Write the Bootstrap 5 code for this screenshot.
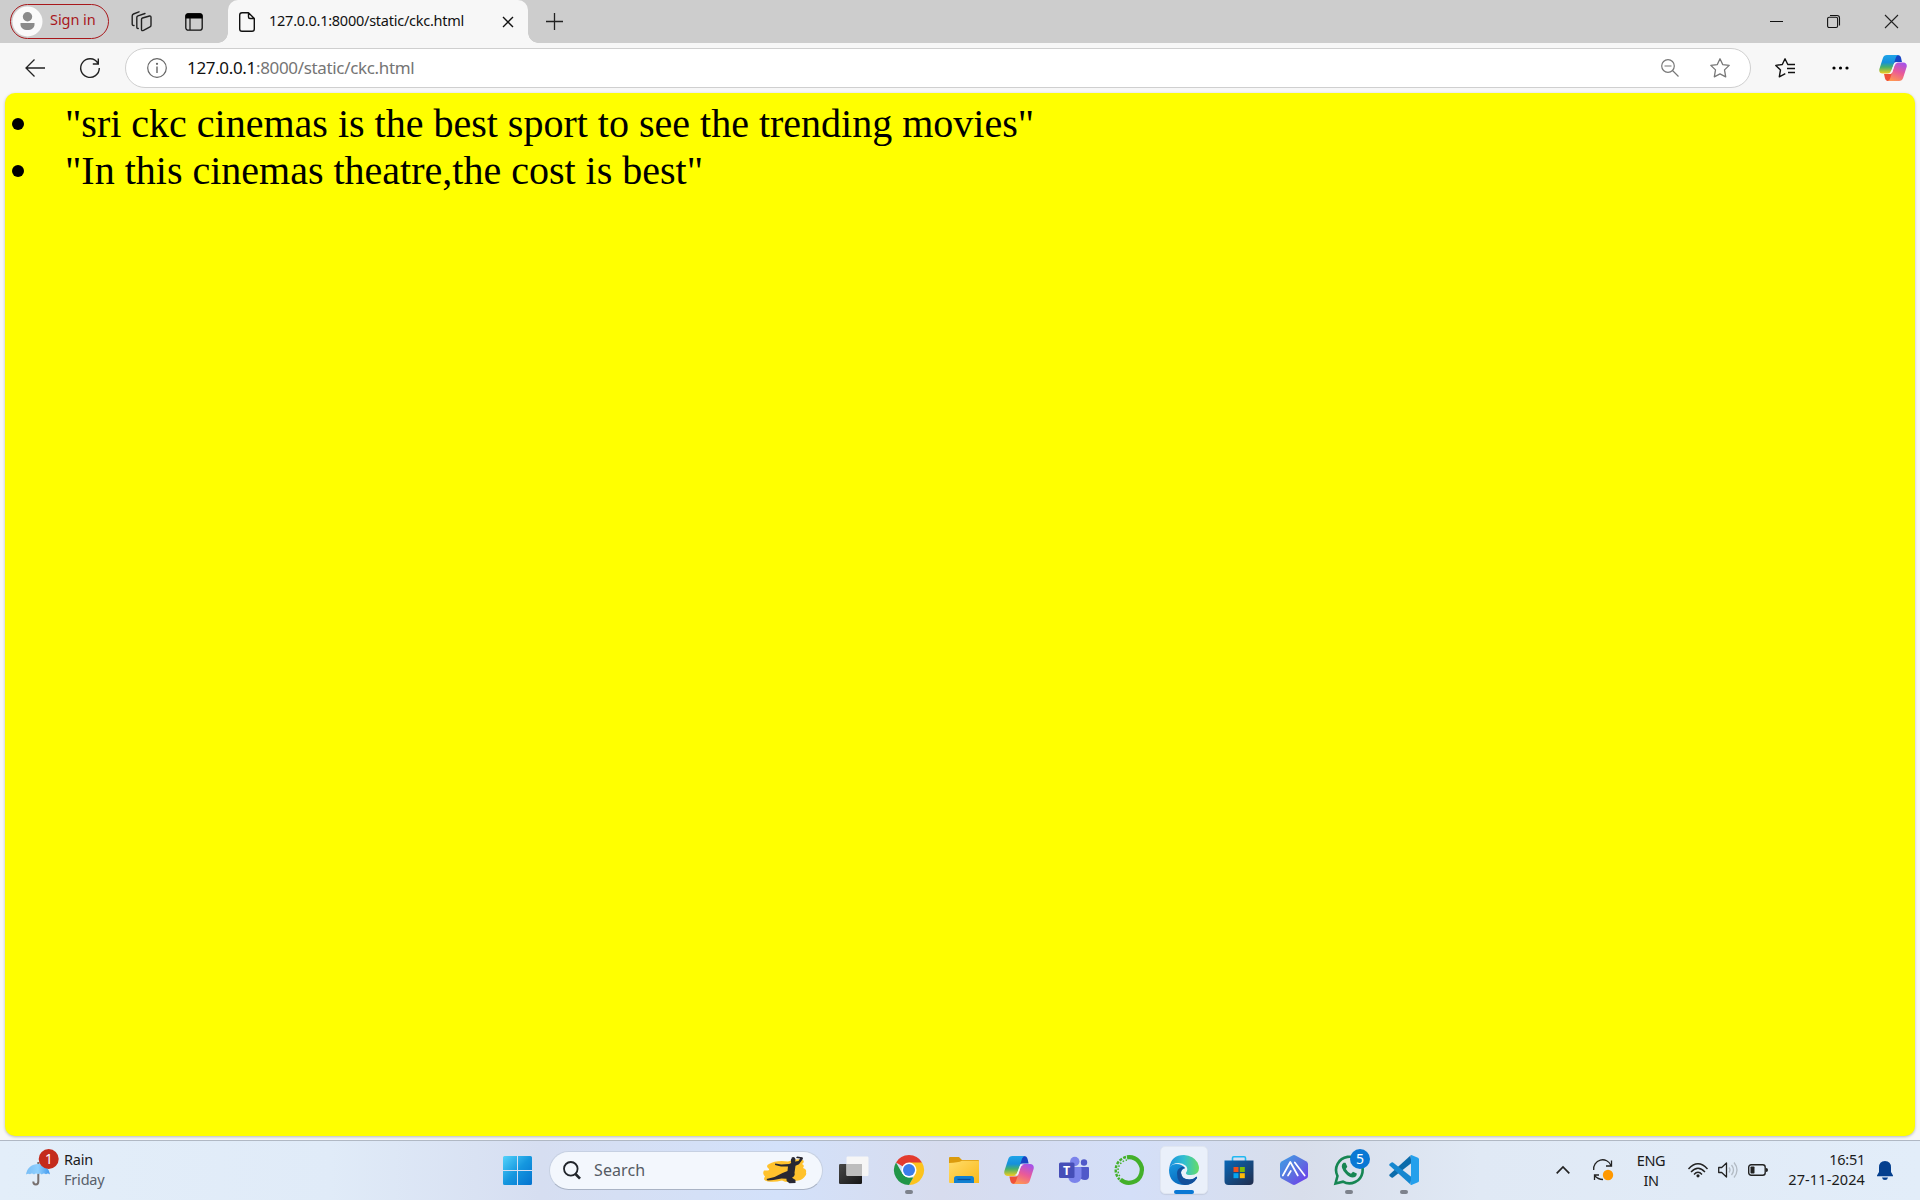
<!DOCTYPE html>
<html lang="en">
<head>
<meta charset="utf-8">
<title>127.0.0.1:8000/static/ckc.html</title>
<link href="https://cdn.jsdelivr.net/npm/bootstrap@5.3.0/dist/css/bootstrap.min.css" rel="stylesheet">
<style>
body{width:1920px;height:1200px;overflow:hidden;background:#f7f7f7;font-family:"Noto Sans","Open Sans",sans-serif;color:#1b1b1b}
svg{display:block;flex:none;overflow:visible}
.tabstrip{height:43px;background:#cdcdcd}
.signin{width:99px;height:35px;margin-left:10px;margin-bottom:1px;border:1.5px solid #a8181c;color:#a8181c;font-size:14.5px;letter-spacing:-.05px}
.tab-active{width:300px;height:43px;margin-left:25px;background:#f7f7f7;border-radius:10px 10px 0 0;font-size:14.5px}
.tab-active::before,.tab-active::after{content:"";position:absolute;bottom:0;width:10px;height:10px}
.tab-active::before{left:-10px;background:radial-gradient(circle at 0 0,transparent 9.5px,#f7f7f7 10px)}
.tab-active::after{right:-10px;background:radial-gradient(circle at 100% 0,transparent 9.5px,#f7f7f7 10px)}
.tab-title{margin-left:14px;width:234px;letter-spacing:-.25px;color:#111;line-height:20px;margin-bottom:3px}
.toolbar{height:50px}
.address{width:1626px;height:40px;margin-left:25px;border:1px solid #cfcfcf;font-size:17px;letter-spacing:-.34px}
.host{color:#111}.urlpath{color:#757575}
.viewport{width:1910px;height:1043px;margin-left:5px;background:#ff0;border-radius:10px;box-shadow:0 1px 3px rgba(0,0,0,.25);font-family:"Liberation Serif",serif;color:#000}
.points{font-size:40px;line-height:47px;padding-top:7px}
.points li{gap:41px;padding-left:7px}
.points li::before{content:"";width:12px;height:12px;margin-top:1px;border-radius:50%;background:#000}
.taskbar{height:60px;margin-top:4px;padding-bottom:1px;border-top:1px solid #b0b8c4;background:linear-gradient(90deg,#e3eef9 0,#e0ebf8 330px,#d6def1 540px,#d3e1fa 780px,#d7dcee 940px,#d4dff8 1130px,#d8deeb 1300px,#e0e9f5 1480px,#e2edf9 1920px)}
.weather{width:503px;padding-left:26px;padding-bottom:2px;font-size:14.5px;line-height:20px}
.weather-text{margin-left:14px;letter-spacing:-.2px}
.muted{color:#58606a}
.searchbox{width:274px;height:39px;margin-left:17px;background:#f3f7fd;border:1px solid #c6d0e2;border-bottom-color:#a9b3c5;font-size:16px;color:#555b64;letter-spacing:.1px}
.app{width:55px;height:58px}
.app-on{position:absolute;width:48px;height:48px;border-radius:5px;background:#eaf0fa;border:1px solid #e0e6f1;box-shadow:0 1px 1px rgba(0,0,0,.08)}
.runbar{position:absolute;bottom:5px;width:8px;height:4px;border-radius:2px;background:#7d828c}
.runbar.wide{width:20px;background:#0a78d4}
.tray{font-size:14.5px;line-height:20px;letter-spacing:-.35px}
.lang{width:30px;margin-left:23px}
.clock{width:87px;margin-left:10px;padding-bottom:2px;letter-spacing:.1px}
.clock-time{letter-spacing:-.25px}
</style>
<script src="https://cdn.jsdelivr.net/npm/bootstrap@5.3.0/dist/js/bootstrap.bundle.min.js"></script>
</head>
<body class="d-flex flex-column">
<svg width="0" height="0" class="position-absolute">
<defs>
<linearGradient id="cpA" x1="0" y1="0" x2="0" y2="1"><stop offset="0" stop-color="#1fa4e8"/><stop offset=".4" stop-color="#1590dc"/><stop offset=".65" stop-color="#48b06a"/><stop offset="1" stop-color="#f5cc1e"/></linearGradient>
<linearGradient id="cpB" x1=".7" y1="0" x2=".3" y2="1"><stop offset="0" stop-color="#a653e8"/><stop offset=".5" stop-color="#ea5a98"/><stop offset="1" stop-color="#ff9752"/></linearGradient>
<linearGradient id="winG" x1="0" y1="0" x2="1" y2="1"><stop offset="0" stop-color="#54d3fb"/><stop offset=".5" stop-color="#1597df"/><stop offset="1" stop-color="#0472cf"/></linearGradient>
<symbol id="copilot" viewBox="0 0 30 30">
<path d="M14 1h6c2 0 3 1 3.600 3l1 4.500h-6c-2 0-3 1-3.500 3z" fill="#1745c4"/>
<path d="M16 29h-6c-2 0-3-1-3.600-3l-1-4.500h6c2 0 3-1 3.500-3z" fill="#ef5038"/>
<path d="M8.500 1H21c-2 .4-2.800 2-3.400 4l-4 12.500c-.8 2.500-2 3.500-4.500 3.500H4C1 21-.3 19 .4 16L4.200 4.200C4.900 2 6.300 1 8.500 1z" fill="url(#cpA)"/>
<path d="M21.500 29H9c2-.4 2.800-2 3.400-4l4-12.500C17.200 10 18.400 9 20.900 9H26c3 0 4.300 2 3.600 5l-3.800 11.800c-.7 2.200-2.100 3.200-4.300 3.200z" fill="url(#cpB)"/>
<path d="M16.300 9.800h3.300c-1.600.4-2.500 1.200-3.200 3.200l-2.200 6.800h-3.300c1.400-.4 2-1.300 2.600-3z" fill="#f3f3fa"/>
</symbol>
</defs></svg>

<header class="tabstrip d-flex align-items-center flex-shrink-0">
<div class="signin rounded-pill d-flex align-items-center">
<svg width="31" height="31" viewBox="0 0 31 31"><circle cx="16.500" cy="15.500" r="15" fill="#fafafa"/><circle cx="16.500" cy="10.800" r="4.700" fill="#8a8a8a"/><path d="M9.500 17h14v1.500c0 3.500-3 5.500-7 5.500s-7-2-7-5.500z" fill="#8a8a8a"/></svg>
<span class="ms-2 mb-1 lh-1">Sign in</span></div>
<svg width="22" height="22" viewBox="0 0 22 22" style="margin-left:22px" fill="none" stroke="#222" stroke-width="1.400" stroke-linejoin="round" stroke-linecap="round"><path d="M11.500 7l7-2q1.500-.3 1.500 1.300v8q0 1.200-1 1.600l-6.500 3.500q-2 .8-2-1V8.500q0-1.200 1-1.500zM7.300 17.500q-1.500.3-1.500-1.500V6.500q0-1.300 1.200-1.700l7-2.300M3 14.500q-1.800.3-1.800-1.500V5q0-1.500 1.300-2L8 .8"/></svg>
<svg width="18" height="18" viewBox="0 0 18 18" style="margin-left:32px"><rect x=".8" y=".8" width="16.400" height="16.400" rx="2.500" fill="none" stroke="#111" stroke-width="1.300"/><path d="M.5 5.500V3Q.5.300 3 .300H15q2.500 0 2.500 2.700v2.500z" fill="#000"/><path d="M5 5v12" stroke="#111" stroke-width="1.200"/></svg>
<div class="tab-active position-relative d-flex align-items-center">
<svg width="16" height="20" viewBox="0 0 16 20" style="margin-left:11px" fill="none" stroke="#111" stroke-width="1.400" stroke-linejoin="round"><path d="M3 .7h6.500L15.300 6.500V17q0 2.300-2.300 2.300H3Q.7 19.300.7 17V3Q.7.700 3 .700zM9.500.700V5q0 1.500 1.500 1.500h4.300"/></svg>
<span class="tab-title">127.0.0.1:8000/static/ckc.html</span>
<svg width="10" height="10" viewBox="0 0 10 10"><path d="M0 0l10 10M10 0L0 10" stroke="#111" stroke-width="1.400"/></svg>
</div>
<svg width="17" height="17" viewBox="0 0 17 17" style="margin-left:18px;margin-bottom:1px"><path d="M0 8.500h17M8.500 0v17" stroke="#222" stroke-width="1.300"/></svg>
<div class="ms-auto d-flex align-items-center">
<svg width="13" height="13" viewBox="0 0 13 13"><path d="M0 6.500h13" stroke="#111"/></svg>
<svg width="13" height="13" viewBox="0 0 13 13" style="margin-left:44px" fill="none" stroke="#111" stroke-width="1.100"><rect x=".6" y="2.300" width="10" height="10.200" rx="1.500"/><path d="M3 .500h7q2.500 0 2.500 2.500v7.500"/></svg>
<svg width="13" height="13" viewBox="0 0 13 13" style="margin:0 22px 0 45px"><path d="M0 0l13 13M13 0L0 13" stroke="#222" stroke-width="1.100"/></svg>
</div>
</header>

<nav class="toolbar d-flex align-items-center flex-shrink-0">
<svg width="20" height="18" viewBox="0 0 20 18" style="margin-left:25px;margin-bottom:1px" fill="none" stroke="#222" stroke-width="1.300"><path d="M9.500.500L1 9l8.500 8.500M1 9h19"/></svg>
<svg width="20" height="20" viewBox="0 0 20 20" style="margin-left:35px" fill="none" stroke="#222" stroke-width="1.400"><path d="M17.800 5A9.300 9.300 0 1 0 19.300 10M18.300.500V6h-5.500"/></svg>
<div class="address bg-white rounded-pill d-flex align-items-center">
<svg width="20" height="20" viewBox="0 0 20 20" style="margin-left:21px" fill="none" stroke="#666" stroke-width="1.200"><circle cx="10" cy="10" r="9.300"/><path d="M10 8.500V15" stroke-width="1.400"/><circle cx="10" cy="5.800" r=".5" fill="#666"/></svg>
<span style="margin-left:20px;margin-bottom:1px"><span class="host">127.0.0.1</span><span class="urlpath">:8000/static/ckc.html</span></span>
<svg width="18" height="18" viewBox="0 0 18 18" class="ms-auto" fill="none" stroke="#777" stroke-width="1.200"><circle cx="7" cy="7" r="6.300"/><path d="M3.500 7h7M11.500 11.500l6 6"/></svg>
<svg width="20" height="20" viewBox="0 0 20 20" style="margin:0 20px 0 31px" fill="none" stroke="#777" stroke-width="1.300" stroke-linejoin="round"><path d="M10 .8l2.700 5.800 6.500.8-4.700 4.500 1.200 6.900L10 15.900l-5.700 2.900 1.200-6.900L.8 7.400l6.500-.8z"/></svg>
</div>
<svg width="20" height="20" viewBox="0 0 20 20" style="margin-left:24px" fill="none" stroke="#111" stroke-width="1.400" stroke-linejoin="round"><path d="M13.500 6.600l-.7-.1L10 .8 7.300 6.500.8 7.400l4.700 4.500-1.200 6.900 6-3.200M13 6.500h7M12 10.500h8M13 14.500h7"/></svg>
<svg width="17" height="4" viewBox="0 0 17 4" style="margin-left:37px"><circle cx="2" cy="2" r="1.600"/><circle cx="8.500" cy="2" r="1.600"/><circle cx="15" cy="2" r="1.600"/></svg>
<svg width="28" height="28" style="margin-left:30px"><use href="#copilot"/></svg>
</nav>

<main class="viewport flex-shrink-0">
<ul class="points list-unstyled mb-0">
<li class="d-flex align-items-center">"sri ckc cinemas is the best sport to see the trending movies"</li>
<li class="d-flex align-items-center">"In this cinemas theatre,the cost is best"</li>
</ul>
</main>

<footer class="taskbar d-flex align-items-center flex-shrink-0">
<div class="weather d-flex align-items-center">
<svg width="24" height="36" viewBox="0 0 24 36"><defs><linearGradient id="umb"><stop stop-color="#78bdf5"/><stop offset=".5" stop-color="#8fd0ff"/><stop offset="1" stop-color="#3f98ee"/></linearGradient></defs><path d="M12.300 11v19.500q0 3-2.500 3t-2.500-3" fill="none" stroke="#77706f" stroke-width="2"/><path d="M0 23.500C1 17 6 13 12 13s11 4 12 10.500q-2-2-4-.3-2.300-1.700-4.200.3-2-1.800-3.800-.3-2-1.500-4 .3-2-1.800-4-.3-2-1.200-4 .3z" fill="url(#umb)"/><circle cx="22.700" cy="8" r="10" fill="#c42b1c"/><text x="22.900" y="13" fill="#fff" font-size="13.500" text-anchor="middle">1</text></svg>
<div class="weather-text"><div>Rain</div><div class="muted">Friday</div></div>
</div>
<svg width="29" height="29" viewBox="0 0 29 29"><path fill="url(#winG)" d="M0 1.500Q0 0 1.500 0H14v14H0zM15 0h12.500Q29 0 29 1.500V14H15zM0 15h14v14H1.500Q0 29 0 27.500zM15 15h14v12.500q0 1.500-1.500 1.500H15z"/></svg>
<div class="searchbox rounded-pill d-flex align-items-center">
<svg width="18" height="19" viewBox="0 0 18 19" style="margin-left:13px" fill="none" stroke="#20242a"><circle cx="7.800" cy="7.800" r="6.800" stroke-width="1.800"/><path d="M12.500 13l4.500 4.700" stroke-width="2.600"/></svg>
<span style="margin-left:13px">Search</span>
<svg width="43" height="28" viewBox="0 0 43 28" style="margin:0 15px 0 auto"><path d="M5 8Q12 4 24 5.500 34 2 39 4q2 2-1 4 3 1 1 4 4 1 3 4.500 1 2-2 5-4 4-10 3-6 3-12 0-7 2-14 1-6-1-3-5-3-3-1-6Q6 15 5 13 1 10 5 8z" fill="#ffc22d"/><path d="M27.500 1.500q3-1.500 4 1.500 0 1.500-.5 2.500l3.500-.5 1.500-2.500-4-.5 1-1.500 5.500.8 .5 1.500-4 5.500-3.500 1.500-1 7q1 3-2.500 5l3.500 2.200v3l-6 .2-2-1.500q-1.500-.8-1-3l-5-.3-8 1.500-6 .7-1-1.500 8-2 8-4 5-2 .5-4.500-7-.2-6-1.500.2-1.500 6 1 8-.5 2-1q-1-4 .8-5z" fill="#292832"/></svg>
</div>
<div class="d-flex" style="margin-left:3px">
<div class="app d-flex align-items-center justify-content-center"><svg width="30" height="30" viewBox="0 0 30 30"><defs><linearGradient id="tvk" x1="0" y1="0" x2="1" y2="1"><stop stop-color="#474747"/><stop offset="1" stop-color="#161616"/></linearGradient></defs><rect x="0" y="9" width="23" height="20" rx="1.200" fill="url(#tvk)"/><rect x="7.500" y="1.500" width="22" height="19.500" rx="1.200" fill="#f6f6f6"/><path d="M7.500 9H23v12H8.500q-1 0-1-1z" fill="#bdbdbd"/></svg></div>
<div class="app position-relative d-flex align-items-center justify-content-center"><svg width="30" height="30" viewBox="0 0 30 30"><path d="M15 15L2 7.500A15 15 0 0 1 28 7.500z" fill="#e33b2e"/><path d="M15 7.500h13A15 15 0 0 1 15 30l6.500-11.200z" fill="#fcc31e"/><path d="M2 7.500l6.500 11.300q2.500 3.700 6.500 3.700h4.300L15 30A15 15 0 0 1 2 7.500z" fill="#219648"/><circle cx="15" cy="15" r="7.500" fill="#fff"/><circle cx="15" cy="15" r="6" fill="#3c7de9"/></svg><i class="runbar"></i></div>
<div class="app d-flex align-items-center justify-content-center"><svg width="30" height="30" viewBox="0 0 30 30"><defs><linearGradient id="fol" x1="0" y1="0" x2="1" y2="1"><stop stop-color="#ffdc6a"/><stop offset="1" stop-color="#fab91a"/></linearGradient></defs><path d="M0 8V3q0-1 1-1h9l3 3h16q1 0 1 1v4H0z" fill="#db9b0d"/><path d="M0 8q9-.2 13-2.300h16q1 0 1 1V28H1q-1 0-1-1z" fill="url(#fol)"/><path d="M5 28v-4.500Q5 21 7.500 21h15q2.500 0 2.500 2.500V28z" fill="#1180d1"/><path d="M8.500 24.500h13" stroke="#07509c" stroke-width="1.300"/></svg></div>
<div class="app d-flex align-items-center justify-content-center"><svg width="30" height="30"><use href="#copilot"/></svg></div>
<div class="app d-flex align-items-center justify-content-center"><svg width="30" height="30" viewBox="0 0 30 30"><circle cx="25" cy="7.500" r="3.200" fill="#5059c9"/><path d="M21 12h8q1 0 1 1v8q0 4-4 4-5 0-5-4z" fill="#5059c9"/><circle cx="15.800" cy="6.500" r="4.700" fill="#7b83eb"/><path d="M9 12h12.500q1 0 1 1v8.500Q22 28 15.800 28T9 21z" fill="#7b83eb"/><rect y="7.500" width="15.500" height="15.500" rx="1.500" fill="#464eb8"/><text x="7.700" y="20" fill="#fff" font-size="12.500" font-weight="700" text-anchor="middle">T</text></svg></div>
<div class="app d-flex align-items-center justify-content-center"><svg width="30" height="30" viewBox="0 0 30 30" fill="none" stroke="#43b02a"><path d="M13 2.300A12.800 12.800 0 1 1 6.500 24.500" stroke-width="4.300"/><path d="M12 2A13.500 13.500 0 0 0 5.500 24.500" stroke-width="2.400" stroke-dasharray="3 1.300"/><path d="M13 5A10.500 10.500 0 0 0 6 21.500" stroke-width="1.500" stroke-dasharray="1.500 1.700"/></svg></div>
<div class="app position-relative d-flex align-items-center justify-content-center"><i class="app-on"></i><svg class="position-relative" width="30" height="30" viewBox="0 0 30 30"><defs><linearGradient id="edA"><stop stop-color="#1a91df"/><stop offset=".5" stop-color="#32bfd0"/><stop offset="1" stop-color="#66dc65"/></linearGradient><linearGradient id="edB" x2=".6" y2="1"><stop stop-color="#1898df"/><stop offset="1" stop-color="#0764b9"/></linearGradient></defs><path d="M0 15Q0 9.500 7 9q7 0 9 4.500-4 .8-4 4.500 1 7 9 6.500 4-.5 6-2.500 1.500-.6 1 1-4 7-12 7Q0 29.500 0 15z" fill="url(#edB)"/><path d="M8 18q0-4 4.500-6 2-.5 3.500.8-4 1.200-4 5.200 1 7 9 6.500 4-.5 6-2.500 1.500-.6 1 1-4 7-12 7-8-1.500-8-12z" fill="#13509b"/><path d="M.300 13Q2 0 15 0q9.500.5 13.500 7.500 1.500 3.500 1.500 5.500 0 7-8 7-4.500 0-5-1.500-.3-1 1-2.500 1-3-1.500-5.500Q14 8 9.500 8 3 8 .300 13z" fill="url(#edA)"/></svg><i class="runbar wide"></i></div>
<div class="app d-flex align-items-center justify-content-center"><svg width="30" height="30" viewBox="0 0 30 30"><defs><linearGradient id="sto" x2="1" y2="1"><stop stop-color="#0867b7"/><stop offset="1" stop-color="#222d4c"/></linearGradient></defs><path d="M8.500 6V3q0-1.300 1.300-1.300h10.400q1.300 0 1.300 1.300v3" fill="none" stroke="#20b8f1" stroke-width="1.600"/><path d="M.500 5.500h29V26q0 4-4 4h-21q-4 0-4-4z" fill="url(#sto)"/><path d="M9.500 12h5v5h-5z" fill="#f1511b"/><path d="M15.800 12h5v5h-5z" fill="#80bc06"/><path d="M9.500 18.200h5v5h-5z" fill="#05a6f0"/><path d="M15.800 18.200h5v5h-5z" fill="#ffba08"/></svg></div>
<div class="app d-flex align-items-center justify-content-center"><svg width="30" height="30" viewBox="0 0 30 30"><defs><linearGradient id="hex" x2="1" y2="1"><stop stop-color="#3aa0e6"/><stop offset=".5" stop-color="#5b73df"/><stop offset="1" stop-color="#7136ee"/></linearGradient></defs><path d="M13.500.500q1.500-.8 3 0l11 6q1.500 1 1.500 2.500v12q0 1.500-1.500 2.500l-11 6q-1.500.8-3 0l-11-6Q1 22.500 1 21V9q0-1.500 1.500-2.500z" fill="url(#hex)"/><path d="M3.800 20.500L11.300 7l7.500 13.500M9 20.500l2.800-4.500M15.800 7.500l9.900 13" fill="none" stroke="#fff" stroke-width="1.700" stroke-linecap="round" stroke-linejoin="round"/></svg></div>
<div class="app position-relative d-flex align-items-center justify-content-center"><svg width="30" height="30" viewBox="0 0 30 30"><path d="M1.500 28.500l2-7.500A13.300 13.300 0 1 1 9 26.700z" fill="none" stroke="#168653" stroke-width="2.600"/><path d="M9.500 7.800h2l1.800 4-1.500 2.200q2 3.500 5.200 4.800l2-2 3.800 1.800q0 4-4.500 4Q14 22 9.500 16q-3.500-5.500 0-8.200z" fill="#168653"/><circle cx="26" cy="4" r="10" fill="#0a78d4"/><text x="26" y="9" fill="#fff" font-size="14" text-anchor="middle">5</text></svg><i class="runbar"></i></div>
<div class="app position-relative d-flex align-items-center justify-content-center"><svg width="30" height="30" viewBox="0 0 30 30"><path d="M.500 19.500L21.500.500l1 7.500L4 22.500q-.8.500-1.500 0l-2-1.500q-.5-.8 0-1.500z" fill="#0c6cab"/><path d="M.500 10.500L21.500 29.500l1-7.500L4 7.500q-.8-.5-1.500 0l-2 1.500q-.5.800 0 1.500z" fill="#1587d0"/><path d="M21.500.300q.5-.5 1.500 0l6 2.500q1 .5 1 1.500v21.400q0 1-1 1.500l-6 2.500q-1 .5-1.500 0l.5-1.700V2z" fill="#25a0ec"/></svg><i class="runbar"></i></div>
</div>
<div class="tray ms-auto d-flex align-items-center">
<svg width="14" height="8" viewBox="0 0 14 8"><path d="M.700 7.300L7 1l6.300 6.300" fill="none" stroke="#222" stroke-width="1.700"/></svg>
<svg width="20" height="20" viewBox="0 0 20 20" style="margin-left:23px" fill="none" stroke="#222" stroke-width="1.300"><path d="M.700 10A9 9 0 0 1 18 5.500M18.500.500v5.500H13M6 15H1.500v5M1.500 15.500q3.500 4 8.500 4"/><circle cx="15" cy="15" r="5.200" fill="#ff9800" stroke="none"/></svg>
<div class="lang text-center"><div>ENG</div><div>IN</div></div>
<svg width="20" height="15" viewBox="0 0 20 15" style="margin-left:22px" fill="none" stroke="#222" stroke-width="1.400"><path d="M.500 6Q10-4.500 19.500 6M3 9q7-7.500 14 0M6 11.500q4-4.500 8 0"/><circle cx="10" cy="12.800" r="1.600" fill="#222" stroke="none"/></svg>
<svg width="20" height="16" viewBox="0 0 20 16" style="margin-left:10px" fill="none" stroke="#222" stroke-width="1.300"><path d="M.700 5.500h3L8.500 1v14l-4.800-4.500h-3z" stroke-linejoin="round"/><g stroke="#b2bac3"><path d="M11 5.500q2 2.500 0 5M13.500 3q4 5 0 10M16 .500q6 7.500 0 15"/></g></svg>
<svg width="20" height="12" viewBox="0 0 20 12" style="margin-left:10px"><rect x=".700" y=".700" width="16.500" height="10.600" rx="2.500" fill="none" stroke="#222" stroke-width="1.400"/><rect x="2.500" y="2.500" width="4" height="7" rx=".8" fill="#222"/><path d="M18 4q2 0 2 2t-2 2z" fill="#222"/></svg>
<div class="clock text-end"><div class="clock-time">16:51</div><div>27-11-2024</div></div>
<svg width="16" height="19" viewBox="0 0 16 19" style="margin:0 27px 0 12px" fill="#043f8e"><path d="M8 0q6 0 6 6.500V11l2 3.500v.7H0v-.7L2 11V6.500Q2 0 8 0zM5 16.500h6q-.5 2.500-3 2.500t-3-2.500z"/></svg>
</div>
</footer>
</body>
</html>
